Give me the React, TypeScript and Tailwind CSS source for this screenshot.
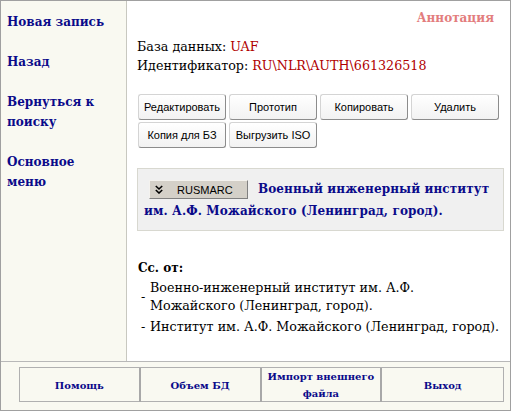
import React from "react";

function Btn({ children }: { children: React.ReactNode }) {
  return (
    <div className="w-[88px] h-[26px] flex items-center justify-center rounded-[3px] border border-[#d4d4d4] border-r-[#8c8c8c] border-b-[#8c8c8c] bg-gradient-to-b from-white to-[#f2f2f2] text-[11px] text-black font-['Liberation_Sans',Arial,sans-serif]">
      {children}
    </div>
  );
}

export default function App() {
  return (
    <div className="w-[511px] h-[411px] border border-[#a0a0a0] bg-[#f9f9f1] flex flex-col font-['DejaVu_Serif',serif]">
      <div className="flex h-[361px] border-b border-[#b8b8b8]">
        <div className="w-[126px] shrink-0 border-r border-[#c8c8c0] pl-[6px] pt-[11px] flex flex-col gap-[20px] text-[12px] leading-[20px] font-bold text-[#0a0a8a]">
          <div>Новая запись</div>
          <div>Назад</div>
          <div>Вернуться к<br />поиску</div>
          <div>Основное<br />меню</div>
        </div>
        <div className="flex-1 bg-white pl-[10px] pr-[6px] pt-[8px]">
          <div className="text-right pr-[10px] text-[12px] leading-[18px] font-bold text-[#e37d7d]">Аннотация</div>
          <div className="mt-[10px] text-[12.7px] leading-[19px] text-black">
            <div>База данных: <span className="text-[#b00000]">UAF</span></div>
            <div>Идентификатор: <span className="text-[#b00000]">RU\NLR\AUTH\661326518</span></div>
          </div>
          <div className="mt-[19px] pl-[1px] flex flex-col gap-[2px]">
            <div className="flex gap-[3px]">
              <Btn>Редактировать</Btn>
              <Btn>Прототип</Btn>
              <Btn>Копировать</Btn>
              <Btn>Удалить</Btn>
            </div>
            <div className="flex gap-[3px]">
              <Btn>Копия для БЗ</Btn>
              <Btn>Выгрузить ISO</Btn>
            </div>
          </div>
          <div className="mt-[20px] bg-[#f0f0f0] border border-[#d8d8d0] px-[6px] pt-[9px] pb-[8px] text-[12px] leading-[22px] font-bold text-[#0a0a8a] tracking-[0.1px]">
            <span className="inline-flex items-center align-middle ml-[5px] mr-[10px] w-[99px] h-[19px] bg-[#d4d0c8] border border-[#f4f2ee] border-r-[#808080] border-b-[#808080] text-[11px] font-normal text-black tracking-normal font-['Liberation_Sans',Arial,sans-serif]">
              <svg width="8" height="9" viewBox="0 0 8 9" className="ml-[5px]">
                <path d="M0.8 1 L4 4 L7.2 1 M0.8 5 L4 8 L7.2 5" fill="none" stroke="#000" strokeWidth="1.6" />
              </svg>
              <span className="ml-[14px]">RUSMARC</span>
            </span>
            Военный инженерный институт им. А.Ф. Можайского (Ленинград, город).
          </div>
          <div className="mt-[28px] pl-[1px] text-[12px] leading-[18px] font-bold text-black">Сс. от:</div>
          <div className="mt-[2px] text-[12.7px] leading-[18px] text-black">
            <div className="flex items-center">
              <span className="w-[13px] pl-[4px] shrink-0">-</span>
              <span>Военно-инженерный институт им. А.Ф.<br />Можайского (Ленинград, город).</span>
            </div>
            <div className="flex items-center mt-[3px]">
              <span className="w-[13px] pl-[4px] shrink-0">-</span>
              <span className="whitespace-nowrap">Институт им. А.Ф. Можайского (Ленинград, город).</span>
            </div>
          </div>
        </div>
      </div>
      <div className="flex-1 pl-[18px] pr-[6px] pt-[5px]">
        <div className="grid grid-cols-4 h-[35px] border border-[#b0b0b0] text-[10px] leading-[17px] font-bold text-[#0a0a8a] text-center">
          <div className="flex items-center justify-center border-r-2 border-[#a8a8a8]">Помощь</div>
          <div className="flex items-center justify-center border-r-2 border-[#a8a8a8]">Объем БД</div>
          <div className="flex items-center justify-center border-r-2 border-[#a8a8a8]">Импорт внешнего<br />файла</div>
          <div className="flex items-center justify-center">Выход</div>
        </div>
      </div>
    </div>
  );
}
